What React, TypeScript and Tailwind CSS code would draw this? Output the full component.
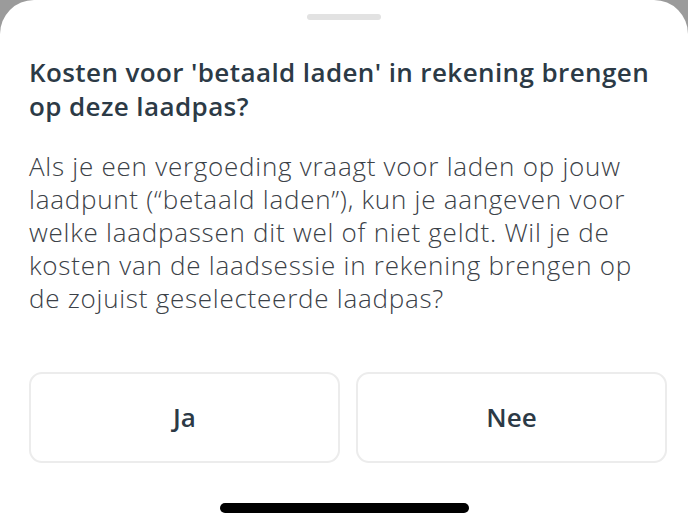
import React from "react";

const App: React.FC = () => {
  return (
    <div
      className="w-[688px] h-[528px] bg-[#9b9b9b] overflow-hidden"
      style={{ fontFamily: "'Open Sans', Lato, sans-serif" }}
    >
      <div className="h-full bg-white rounded-t-[34px] flex flex-col px-[29px]">
        <div className="flex justify-center pt-[14px]">
          <div className="w-[74px] h-[6px] rounded-full bg-[#e2e2e2]" />
        </div>

        <h1 className="mt-[35px] text-[26px] leading-[34px] font-semibold tracking-[0.4px] text-[#2c3a46] whitespace-nowrap">
          Kosten voor 'betaald laden' in rekening brengen
          <br />
          op deze laadpas?
        </h1>

        <p className="mt-[27px] text-[26px] leading-[33px] font-light tracking-[0.75px] text-[#3b4147] whitespace-nowrap">
          Als je een vergoeding vraagt voor laden op jouw
          <br />
          laadpunt (“betaald laden”), kun je aangeven voor
          <br />
          welke laadpassen dit wel of niet geldt. Wil je de
          <br />
          kosten van de laadsessie in rekening brengen op
          <br />
          de zojuist geselecteerde laadpas?
        </p>

        <div className="mt-[57px] flex gap-[16px] -mr-[8px]">
          <button className="flex-1 h-[91px] rounded-[13px] border-2 border-[#ececec] bg-white text-[26px] font-semibold text-[#2c3a46]">
            Ja
          </button>
          <button className="flex-1 h-[91px] rounded-[13px] border-2 border-[#ececec] bg-white text-[26px] font-semibold text-[#2c3a46]">
            Nee
          </button>
        </div>

        <div className="mt-auto mb-[15px] flex justify-center">
          <div className="w-[249px] h-[10px] rounded-full bg-black" />
        </div>
      </div>
    </div>
  );
};

export default App;
